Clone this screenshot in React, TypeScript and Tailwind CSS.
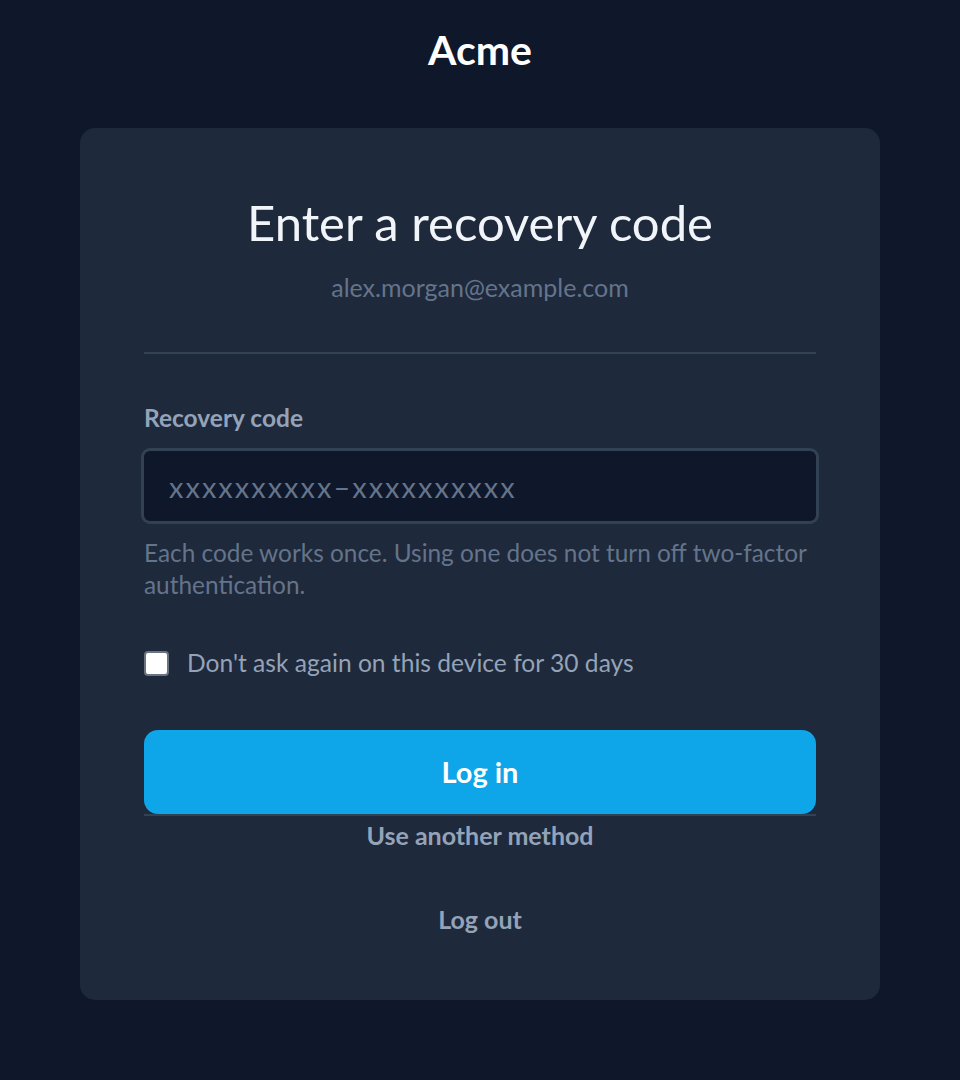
import React from "react";

export default function App() {
  return (
    <div
      className="min-h-screen w-full bg-[#0f172a] flex flex-col items-center"
      style={{ fontFamily: "Lato, 'Open Sans', sans-serif" }}
    >
      <div className="h-[100px] flex items-center justify-center text-[41px] font-bold text-white">
        Acme
      </div>
      <div className="mt-[28px] w-[800px] rounded-[15px] bg-[#1e293b] px-16 pt-[67px] pb-[60px] flex flex-col">
        <h1 className="h-[56px] flex items-center justify-center text-[49px] font-normal text-[#f1f5f9]">
          Enter a recovery code
        </h1>
        <div className="mt-[22px] h-[30px] flex items-center justify-center text-[25px] text-[#64748b]">
          alex.morgan@example.com
        </div>
        <div className="mt-[49px] h-[2px] bg-[#334155]" />
        <label className="mt-[50px] h-[28px] flex items-center text-[24.5px] font-bold text-[#94a3b8]">
          Recovery code
        </label>
        <input
          className="mt-[16px] -mx-[3px] h-[76px] rounded-[9px] border-[3px] border-[#334155] bg-[#0f172a] px-[25px] text-[29px] tracking-[2px] text-[#e2e8f0] placeholder:text-[#64748b] outline-none"
          placeholder="xxxxxxxxxx–xxxxxxxxxx"
        />
        <p className="mt-[13px] text-[24.4px] leading-[32px] text-[#64748b]">
          Each code works once. Using one does not turn off two-factor authentication.
        </p>
        <label className="mt-[48px] h-[28px] flex items-center gap-[18px] text-[24.6px] text-[#94a3b8]">
          <span className="w-[25px] h-[25px] rounded-[4px] bg-white border-2 border-[#6b7280] shrink-0" />
          Don't ask again on this device for 30 days
        </label>
        <button className="mt-[53px] h-[84px] w-full rounded-[14px] bg-[#0ea5e9] text-[29px] font-bold text-white">
          Log in
        </button>
        <div className="h-[2px] bg-[#334155]" />
        <button className="h-[40px] flex items-center justify-center text-[25px] font-bold text-[#94a3b8]">
          Use another method
        </button>
        <button className="mt-[44px] h-[40px] flex items-center justify-center text-[25px] font-bold text-[#94a3b8]">
          Log out
        </button>
      </div>
    </div>
  );
}
